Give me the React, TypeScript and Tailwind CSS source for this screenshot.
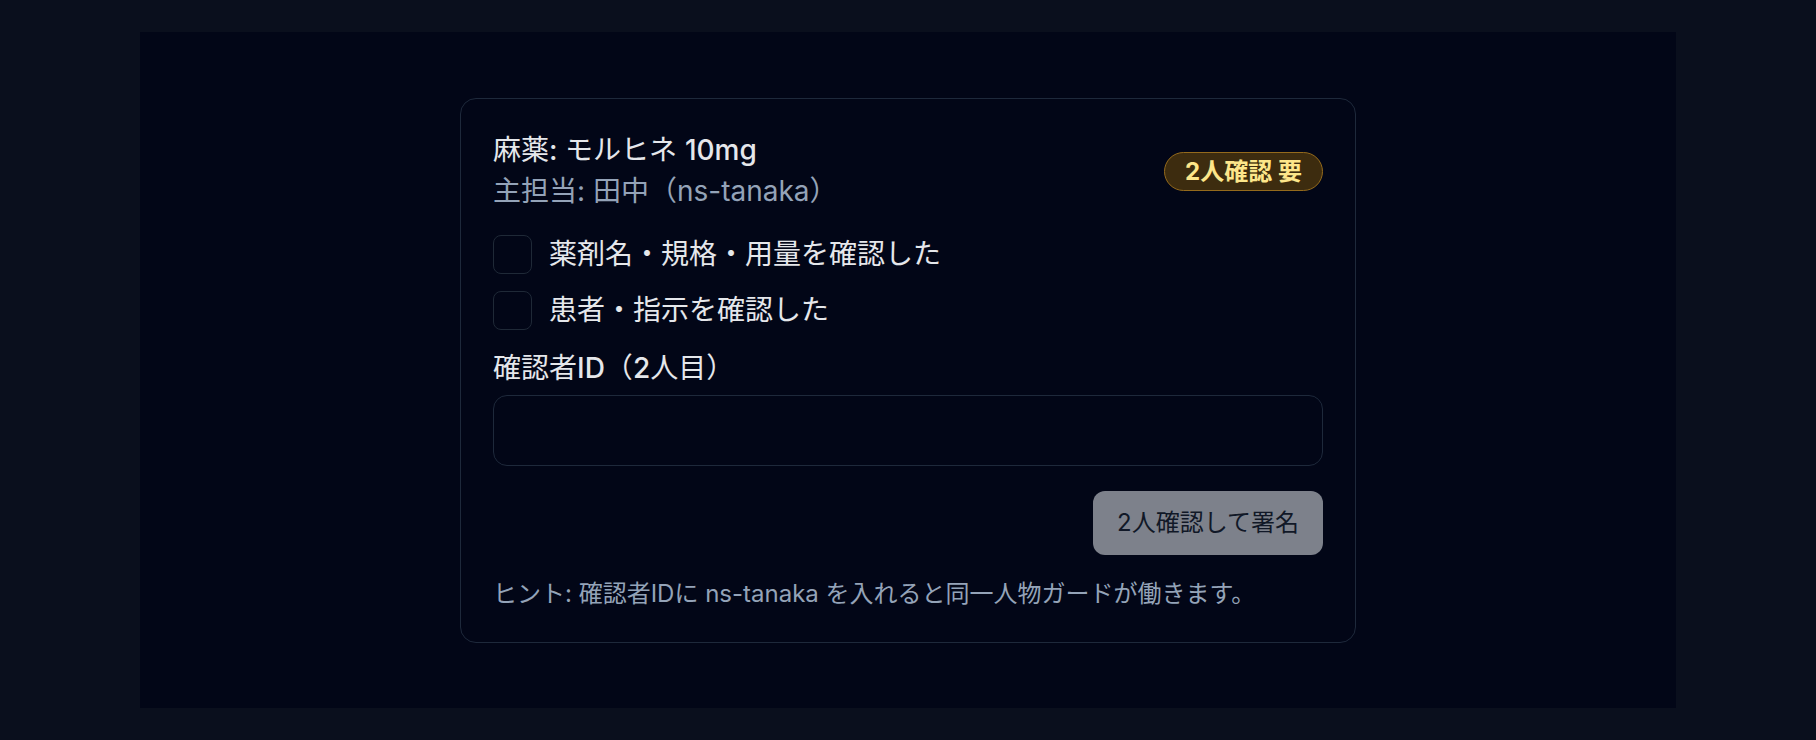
import React from "react";

const font = { fontFamily: 'Inter, "Noto Sans CJK JP", sans-serif' };

export default function App() {
  return (
    <div className="h-screen w-full bg-[#0a0f1d] p-8 flex" style={font}>
      <div className="mx-auto w-full max-w-[1536px] bg-[#020617] flex items-center justify-center">
        <div className="w-[896px] rounded-2xl border border-[#1e293b] bg-[#020617] p-8 flex flex-col">
          <div className="flex items-center justify-between">
            <div className="flex flex-col">
              <div className="text-[28px] leading-[38px] text-[#e5e7eb]">
                麻薬<span className="font-medium">: </span>モルヒネ <span className="font-medium">10mg</span>
              </div>
              <div className="text-[28px] leading-[44px] text-[#94a3b8]">主担当: 田中（ns-tanaka）</div>
            </div>
            <div className="h-[39px] w-[159px] rounded-full border-[1.5px] border-[#946a1c] bg-[#3d2c0f] flex items-center justify-center text-[24px] font-bold text-[#fde68a]">
              2人確認 要
            </div>
          </div>

          <div className="mt-[22px] flex flex-col gap-[17px]">
            <label className="flex items-center gap-[17px]">
              <span className="h-[39px] w-[39px] rounded-[8px] border border-[#1f2937] bg-[#020617]" />
              <span className="text-[28px] leading-[39px] text-[#e5e7eb]">薬剤名・規格・用量を確認した</span>
            </label>
            <label className="flex items-center gap-[17px]">
              <span className="h-[39px] w-[39px] rounded-[8px] border border-[#1f2937] bg-[#020617]" />
              <span className="text-[28px] leading-[39px] text-[#e5e7eb]">患者・指示を確認した</span>
            </label>
          </div>

          <div className="mt-[20px] text-[28px] leading-[36px] text-[#e5e7eb]">
            確認者<span className="font-medium">ID</span>（<span className="font-medium">2</span>人目）
          </div>
          <input
            className="mt-[9px] h-[71px] w-full rounded-[14px] border border-[#1e293b] bg-[#020617] px-4 text-[24px] text-[#e5e7eb] outline-none"
            type="text"
          />

          <div className="mt-[25px] flex justify-end">
            <button className="h-[64px] w-[230px] rounded-xl bg-[#7d818b] text-[24px] text-[#111827]">
              2人確認して署名
            </button>
          </div>

          <div className="mt-[23px] text-[24px] leading-[32px] text-[#94a3b8]">
            ヒント: 確認者IDに ns-tanaka を入れると同一人物ガードが働きます。
          </div>
        </div>
      </div>
    </div>
  );
}
